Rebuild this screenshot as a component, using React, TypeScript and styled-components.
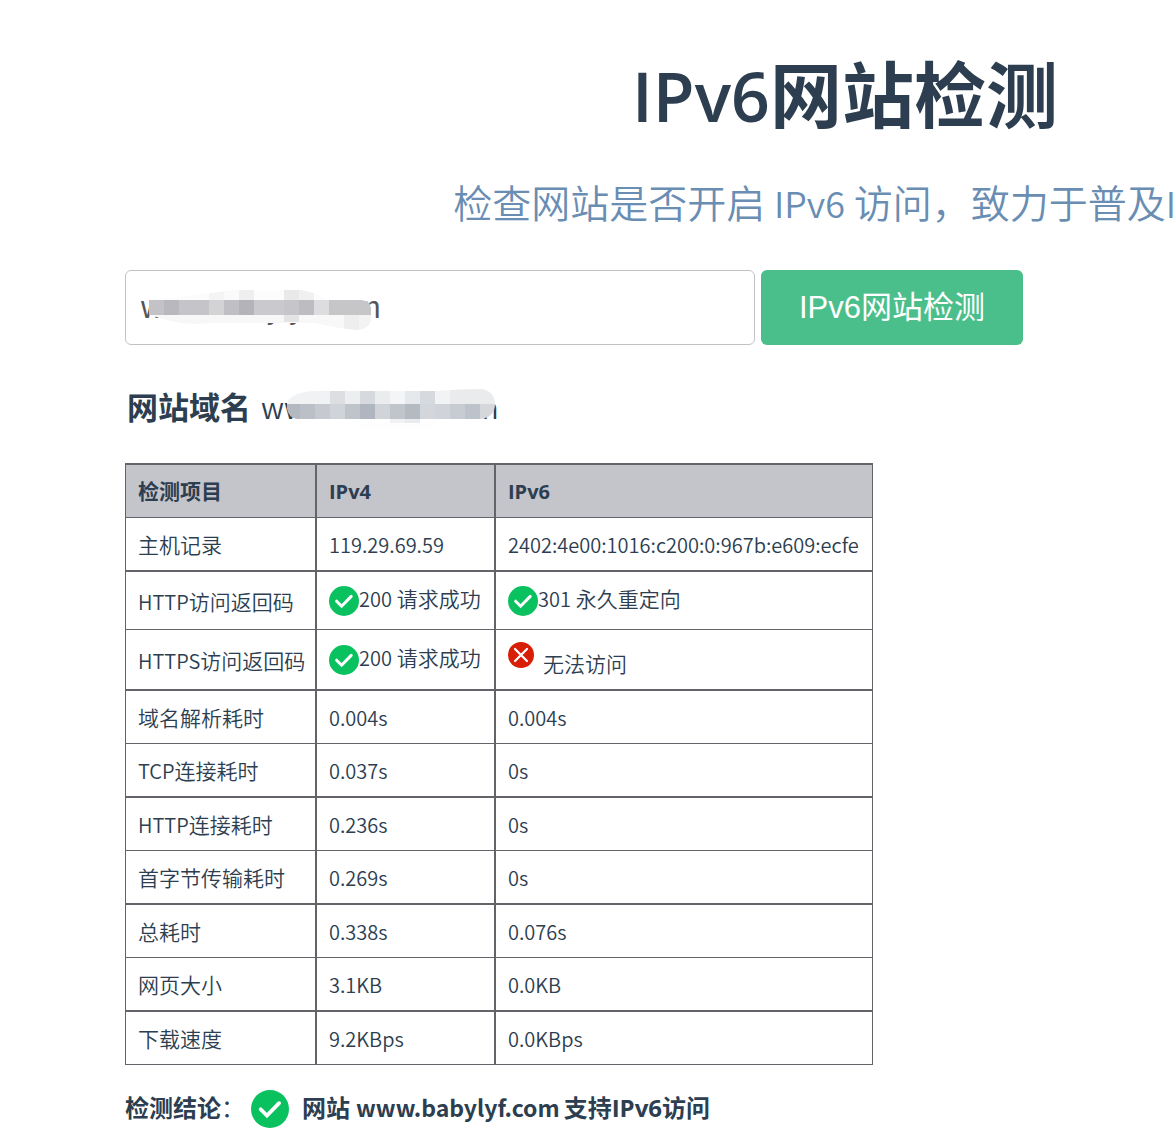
import React, { useState } from "react";
import styled, { createGlobalStyle } from "styled-components";

const GlobalStyle = createGlobalStyle`
  *, *::before, *::after { box-sizing: border-box; }
  body {
    margin: 0;
    background: #fff;
    color: #2c3e50;
    font-family: "Noto Sans CJK SC", sans-serif;
  }
`;

const boldStack = `"Open Sans", "Noto Sans CJK SC", sans-serif`;
const controlStack = `"Liberation Sans", "Noto Sans CJK SC", sans-serif`;

const Page = styled.main`
  padding: 44px 0 12px 125px;
  overflow: hidden;
`;

const Container = styled.div`
  width: 1440px;
`;

const Header = styled.header`
  display: flex;
  flex-direction: column;
  align-items: center;
  white-space: nowrap;
`;

const Title = styled.h1`
  margin: 0;
  font-family: ${boldStack};
  font-size: 72px;
  line-height: 100px;
  font-weight: 700;
`;

const TitleLatin = styled.span`
  font-size: 68px;
  font-weight: 600;
`;

const Subtitle = styled.p`
  margin: 26px 0 0;
  font-size: 39px;
  line-height: 58px;
  font-weight: 350;
  color: #698db3;
`;

const SubtitleLatin = styled.span`
  font-size: 36px;
  line-height: 1;
`;

const Form = styled.form`
  display: flex;
  gap: 6px;
  margin-top: 40px;
`;

const Field = styled.label`
  position: relative;
  width: 630px;
`;

const DomainInput = styled.input`
  display: block;
  width: 100%;
  height: 75px;
  padding: 0 15px;
  border: 1px solid #c2c2c6;
  border-radius: 6px;
  background: #fff;
  color: #555;
  font-family: ${controlStack};
  font-size: 31px;
  outline: none;
`;

const SubmitButton = styled.button`
  width: 262px;
  height: 75px;
  padding: 0 0 6px;
  border: 0;
  border-radius: 6px;
  background: #4bbf8b;
  color: #fff;
  font-family: ${controlStack};
  font-size: 31px;
  font-weight: 400;
  cursor: pointer;
`;

const DomainLine = styled.h2`
  display: flex;
  align-items: center;
  gap: 10px;
  margin: 41px 0 0;
  padding-left: 2px;
  font-size: 31px;
  line-height: 40px;
  font-weight: 700;
`;

const DomainName = styled.span`
  position: relative;
  font-size: 29px;
  font-weight: 350;
`;

const Mosaic = styled.svg<{ $left: number; $top: number }>`
  position: absolute;
  left: ${(p) => p.$left}px;
  top: ${(p) => p.$top}px;
  pointer-events: none;
`;

const Table = styled.table`
  width: 748px;
  margin-top: 37px;
  table-layout: fixed;
  border-spacing: 0;
  border-top: 2px solid #636469;
  border-left: 1px solid #636469;
  font-size: 21px;
  line-height: 28px;
  font-weight: 350;
  text-align: left;

  th, td {
    padding: 12px 4px 12px 12px;
    border-right: 2px solid #636469;
    border-bottom: 1px solid #636469;
    white-space: nowrap;
  }
  th:last-child, td:last-child { border-right-width: 1px; }
  tbody tr:nth-child(odd) > * { border-bottom-width: 2px; }
  tbody tr:last-child > * { border-bottom-width: 1px; }
`;

const Col = styled.col<{ $w: number }>`
  width: ${(p) => p.$w}px;
`;

const HeadCell = styled.th`
  background: #c4c4cb;
  font-family: ${boldStack};
  font-weight: 700;
`;

const RowHead = styled.th`
  font-weight: 350;
`;

const Latin = styled.span`
  font-size: 20px;
  line-height: 1;
`;

const Status = styled.span<{ $failed?: boolean }>`
  display: flex;
  align-items: ${(p) => (p.$failed ? "flex-start" : "center")};
  gap: ${(p) => (p.$failed ? 9 : 0)}px;
  height: ${(p) => (p.$failed ? 35 : 33)}px;
`;

const StatusText = styled.span<{ $failed?: boolean }>`
  align-self: ${(p) => (p.$failed ? "flex-end" : "flex-start")};
`;

const Conclusion = styled.p`
  display: flex;
  align-items: center;
  margin: 25px 0 0;
  font-family: ${boldStack};
  font-size: 24px;
  line-height: 36px;
  font-weight: 700;
  white-space: nowrap;

  svg { margin: 0 13px 0 6px; }
`;

const ConclusionText = styled.span`
  padding-bottom: 2px;
`;

const Colon = styled.span`
  font-weight: 350;
`;

const Host = styled.span`
  margin: 0 4px 0 6px;
  font-family: "Noto Sans CJK SC", sans-serif;
  font-size: 23px;
  line-height: 1;
`;

/* Latin letters and digits are set a step smaller than the Chinese around them. */
function Mixed({ text }: { text: string }) {
  return (
    <>
      {text.split(/([A-Za-z0-9.:]+)/).map((part, i) =>
        i % 2 ? <Latin key={i}>{part}</Latin> : part
      )}
    </>
  );
}

function OkIcon({ size }: { size: number }) {
  return (
    <svg width={size} height={size} viewBox="0 0 30 30" aria-hidden="true">
      <circle cx="15" cy="15" r="15" fill="#0ac160" />
      <path d="M7.6 15.2l5 5L22.2 10.4" fill="none" stroke="#fff" strokeWidth="3" strokeLinecap="round" />
    </svg>
  );
}

function FailIcon() {
  return (
    <svg width="26" height="26" viewBox="0 0 26 26" aria-hidden="true">
      <circle cx="13" cy="13" r="13" fill="#d81e06" />
      <path d="M7 7l12 12M19 7L7 19" fill="none" stroke="#fff" strokeWidth="2.2" strokeLinecap="round" />
    </svg>
  );
}

type Block = [x: number, y: number, w: number, h: number, fill: string];

const inputBlocks: Block[] = [
  [0, 0, 222, 40, "#fcfcfc"],
  [60, 0, 15, 10, "#f4f4f4"], [75, 0, 15, 10, "#fafafa"], [90, 0, 15, 10, "#efeff0"],
  [135, 0, 15, 10, "#e9e9ea"], [150, 0, 15, 10, "#f0f0f1"],
  [0, 25, 135, 15, "#f7f7f7"], [135, 25, 15, 7, "#e4e4e5"], [150, 25, 45, 15, "#f8f8f8"],
  [195, 25, 15, 15, "#eeeeef"], [210, 25, 12, 15, "#f3f3f3"],
  [0, 10, 15, 15, "#c3c3c7"], [15, 10, 15, 15, "#b9b8be"], [30, 10, 30, 15, "#c4c4c9"],
  [60, 10, 15, 15, "#d3d3d6"], [75, 10, 15, 15, "#c0bfc5"], [90, 10, 15, 15, "#b4b3b9"],
  [105, 10, 30, 15, "#cacace"], [135, 10, 15, 15, "#c6c6ca"], [150, 10, 15, 15, "#bdbdc1"],
  [165, 10, 15, 15, "#dddde0"], [180, 10, 42, 15, "#c6c6c9"],
];

const nameBlocks: Block[] = [
  [0, 2, 45, 13, "#f1f2f3"], [45, 2, 15, 13, "#dcdee1"], [60, 2, 15, 13, "#eceef0"],
  [75, 2, 15, 13, "#d6d9dd"], [90, 2, 15, 13, "#eaecee"], [105, 2, 15, 13, "#f4f5f6"],
  [120, 2, 15, 13, "#e6e9ec"], [135, 2, 15, 13, "#d6d9de"], [150, 1, 15, 14, "#f2f3f4"],
  [165, 0, 45, 15, "#e9ebed"],
  [0, 15, 15, 15, "#b4b8c0"], [15, 15, 15, 15, "#bbbfc7"], [30, 15, 15, 15, "#c6cad0"],
  [45, 15, 15, 15, "#d0d3d8"], [60, 15, 15, 15, "#bfc3ca"], [75, 15, 15, 15, "#b0b6bf"],
  [90, 15, 15, 15, "#d0d4d9"], [105, 15, 15, 15, "#c0c5cc"], [120, 15, 15, 15, "#b3bac2"],
  [135, 15, 15, 15, "#d3d6da"], [150, 15, 15, 15, "#d0d3da"], [165, 15, 15, 15, "#c7ccd3"],
  [180, 15, 15, 15, "#bdc3cb"], [195, 15, 15, 15, "#d5d7da"],
  [75, 30, 75, 10, "#fefefe"],
  [105, 30, 15, 4, "#eff1f3"], [120, 30, 15, 4, "#e9ecef"],
];

function InputMosaic() {
  return (
    <Mosaic $left={24} $top={20} width="226" height="40" aria-hidden="true">
      <clipPath id="input-mask">
        <path d="M0 10L62 3Q75 1 90 0L152 0L165 3L180 10H213Q224 12 223 26Q222 40 206 40Q186 38 166 33L60 33Q40 36 18 30Q4 26 0 24Z" />
      </clipPath>
      <g clipPath="url(#input-mask)" shapeRendering="crispEdges">
        {inputBlocks.map(([x, y, w, h, fill], i) => (
          <rect key={i} x={x} y={y} width={w} height={h} fill={fill} />
        ))}
      </g>
    </Mosaic>
  );
}

function NameMosaic() {
  return (
    <Mosaic $left={24} $top={3} width="212" height="40" aria-hidden="true">
      <clipPath id="name-mask">
        <path d="M2 14Q8 2 32 2H150Q175 0 196 0Q210 2 210 15Q210 28 196 30H150V40H75V30H12Q4 29 2 20Z" />
      </clipPath>
      <g clipPath="url(#name-mask)" shapeRendering="crispEdges">
        {nameBlocks.map(([x, y, w, h, fill], i) => (
          <rect key={i} x={x} y={y} width={w} height={h} fill={fill} />
        ))}
      </g>
    </Mosaic>
  );
}

function Ok({ text }: { text: string }) {
  return (
    <Status>
      <OkIcon size={30} />
      <StatusText><Mixed text={text} /></StatusText>
    </Status>
  );
}

function Fail({ text }: { text: string }) {
  return (
    <Status $failed>
      <FailIcon />
      <StatusText $failed>{text}</StatusText>
    </Status>
  );
}

const rows: { label: string; v4: React.ReactNode; v6: React.ReactNode }[] = [
  { label: "主机记录", v4: <Mixed text="119.29.69.59" />, v6: <Mixed text="2402:4e00:1016:c200:0:967b:e609:ecfe" /> },
  { label: "HTTP访问返回码", v4: <Ok text="200 请求成功" />, v6: <Ok text="301 永久重定向" /> },
  { label: "HTTPS访问返回码", v4: <Ok text="200 请求成功" />, v6: <Fail text="无法访问" /> },
  { label: "域名解析耗时", v4: <Mixed text="0.004s" />, v6: <Mixed text="0.004s" /> },
  { label: "TCP连接耗时", v4: <Mixed text="0.037s" />, v6: <Mixed text="0s" /> },
  { label: "HTTP连接耗时", v4: <Mixed text="0.236s" />, v6: <Mixed text="0s" /> },
  { label: "首字节传输耗时", v4: <Mixed text="0.269s" />, v6: <Mixed text="0s" /> },
  { label: "总耗时", v4: <Mixed text="0.338s" />, v6: <Mixed text="0.076s" /> },
  { label: "网页大小", v4: <Mixed text="3.1KB" />, v6: <Mixed text="0.0KB" /> },
  { label: "下载速度", v4: <Mixed text="9.2KBps" />, v6: <Mixed text="0.0KBps" /> },
];

export default function App() {
  const [domain, setDomain] = useState("www.babylyf.com");
  return (
    <>
      <GlobalStyle />
      <Page>
        <Container>
          <Header>
            <Title><TitleLatin>IPv6</TitleLatin>网站检测</Title>
            <Subtitle>
              检查网站是否开启 <SubtitleLatin>IPv6</SubtitleLatin> 访问，致力于普及<SubtitleLatin>IPv6</SubtitleLatin>
            </Subtitle>
          </Header>
          <Form onSubmit={(e) => e.preventDefault()}>
            <Field>
              <DomainInput aria-label="网站域名" value={domain} onChange={(e) => setDomain(e.target.value)} />
              <InputMosaic />
            </Field>
            <SubmitButton type="submit">IPv6网站检测</SubmitButton>
          </Form>
          <DomainLine>
            网站域名
            <DomainName>
              www.babylyf.com
              <NameMosaic />
            </DomainName>
          </DomainLine>
          <Table>
            <colgroup>
              <Col $w={191} />
              <Col $w={179} />
              <Col />
            </colgroup>
            <thead>
              <tr>
                <HeadCell scope="col">检测项目</HeadCell>
                <HeadCell scope="col"><Latin>IPv4</Latin></HeadCell>
                <HeadCell scope="col"><Latin>IPv6</Latin></HeadCell>
              </tr>
            </thead>
            <tbody>
              {rows.map((row) => (
                <tr key={row.label}>
                  <RowHead scope="row"><Mixed text={row.label} /></RowHead>
                  <td>{row.v4}</td>
                  <td>{row.v6}</td>
                </tr>
              ))}
            </tbody>
          </Table>
          <Conclusion>
            <ConclusionText>检测结论<Colon>：</Colon></ConclusionText>
            <OkIcon size={38} />
            <ConclusionText>网站<Host>www.babylyf.com</Host>支持IPv6访问</ConclusionText>
          </Conclusion>
        </Container>
      </Page>
    </>
  );
}
